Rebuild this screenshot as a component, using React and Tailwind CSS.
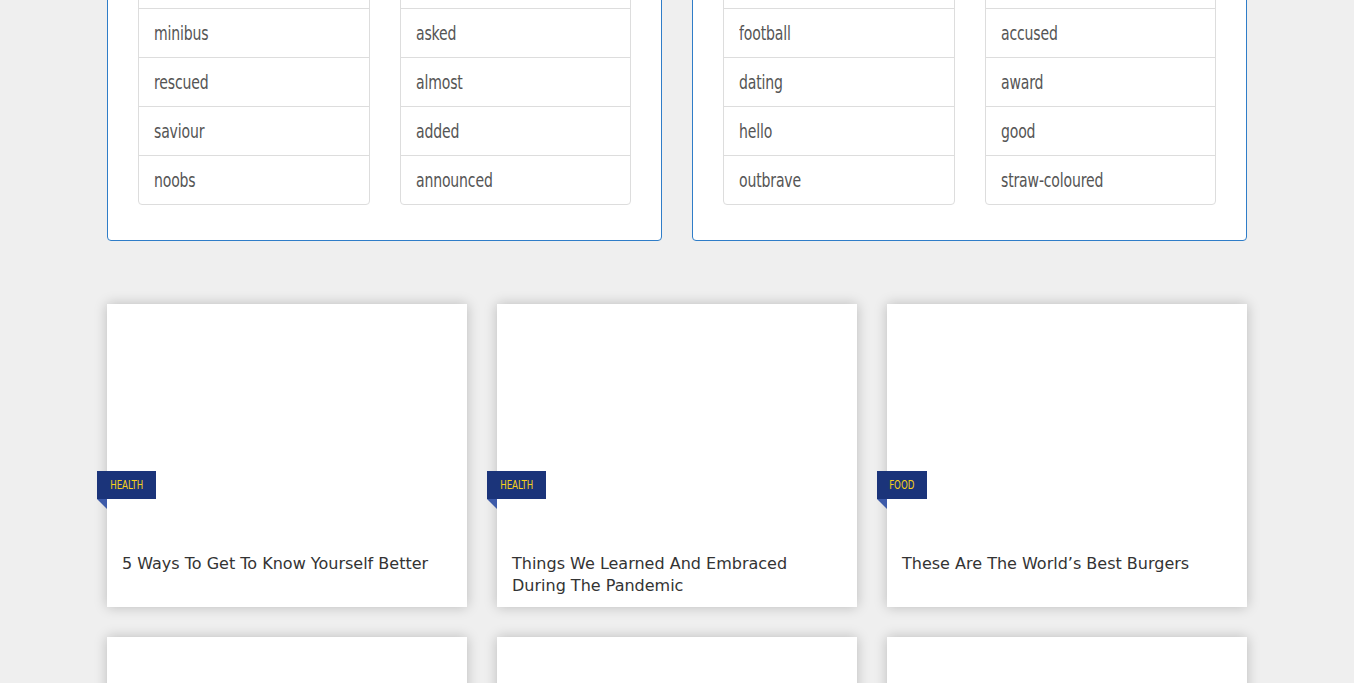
const leftCols = [
  ['tidy', 'minibus', 'rescued', 'saviour', 'noobs'],
  ['fresh', 'asked', 'almost', 'added', 'announced'],
]
const rightCols = [
  ['match', 'football', 'dating', 'hello', 'outbrave'],
  ['winner', 'accused', 'award', 'good', 'straw-coloured'],
]

const posts = [
  { cat: 'Health', title: '5 Ways To Get To Know Yourself Better' },
  { cat: 'Health', title: 'Things We Learned And Embraced During The Pandemic' },
  { cat: 'Food', title: 'These Are The World’s Best Burgers' },
  { cat: 'Travel', title: 'Top Places To Visit This Summer' },
  { cat: 'Lifestyle', title: 'Simple Habits For A Calmer Morning' },
  { cat: 'Food', title: 'Easy Recipes For Busy Weeknights' },
]

const oswald = { fontFamily: '"DejaVu Sans Condensed", "DejaVu Sans", sans-serif' }

function WordList({ words }) {
  return (
    <ul className="border border-[#dddddd] rounded-[4px] bg-white">
      {words.map((w, i) => (
        <li key={w}
          className={`h-[49px] flex items-center px-[15px] text-[20px] text-[#555555] ${i > 0 ? 'border-t border-[#dddddd]' : ''}`}>
          <span className="inline-block origin-left scale-x-[0.78] tracking-[-0.2px]" style={oswald}>{w}</span>
        </li>
      ))}
    </ul>
  )
}

function WordBox({ cols }) {
  return (
    <div className="bg-white border border-[#2f7dc8] rounded-[4px] px-[30px] pt-[30px] pb-[35px]">
      <div className="grid grid-cols-2 gap-[30px]">
        {cols.map((c, i) => <WordList key={i} words={c} />)}
      </div>
    </div>
  )
}

function PostCard({ post }) {
  return (
    <div className="relative bg-white shadow-[0_0_12px_rgba(0,0,0,0.22)] flex flex-col">
      <div className="h-[233px] bg-white" />
      <div className="absolute left-[-10px] top-[167px]">
        <div className="h-[28px] px-[9px] bg-[#1b347a] flex items-center">
          <span className="text-[12px] font-medium text-[#f7d117] uppercase inline-block scale-x-[0.8]" style={oswald}>{post.cat}</span>
        </div>
        <div className="w-0 h-0 border-t-[10px] border-t-[#3d5aa8] border-l-[10px] border-l-transparent" />
      </div>
      <div className="px-[15px] pt-[16px] pb-[10px]">
        <h3 className="text-[16px] leading-[22px] text-[#333333]"
          style={{ fontFamily: '"DejaVu Sans", sans-serif' }}>{post.title}</h3>
      </div>
    </div>
  )
}

export default function App() {
  return (
    <div className="flex min-h-screen overflow-hidden h-[683px]">
      <div className="w-[1354px] bg-[#efefef] shrink-0">
        <div className="w-[1140px] ml-[107px] -mt-[73px]">
          <div className="grid grid-cols-2 gap-[30px]">
            <WordBox cols={leftCols} />
            <WordBox cols={rightCols} />
          </div>
          <div className="grid grid-cols-3 gap-[30px] mt-[63px]">
            {posts.map((p, i) => <PostCard key={i} post={p} />)}
          </div>
        </div>
      </div>
      <div className="flex-1 bg-white" />
    </div>
  )
}
